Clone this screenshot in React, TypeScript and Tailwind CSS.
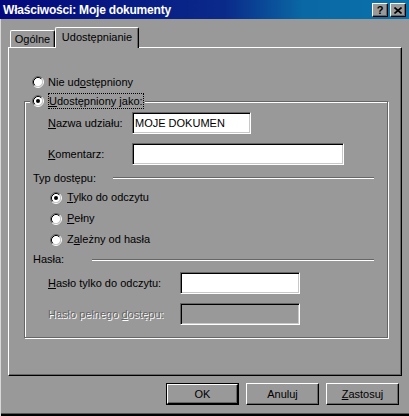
import React from 'react';

// Okno właściwości w stylu Windows 95/98

function Radio({ checked }: { checked?: boolean }) {
  return (
    <svg width="12" height="12" viewBox="0 0 12 12" className="shrink-0">
      <circle cx="6" cy="6" r="4.5" fill="#fff" />
      <path d="M2.11 9.89A5.5 5.5 0 0 1 9.89 2.11" stroke="#666" fill="none" />
      <path d="M9.89 2.11A5.5 5.5 0 0 1 2.11 9.89" stroke="#fff" fill="none" />
      <path d="M2.82 9.18A4.5 4.5 0 0 1 9.18 2.82" stroke="#000" fill="none" />
      <path d="M9.18 2.82A4.5 4.5 0 0 1 2.82 9.18" stroke="#c8c8c8" fill="none" />
      {checked && <circle cx="6" cy="6" r="2" fill="#000" />}
    </svg>
  );
}

function Field({ className, value, disabled }: { className: string; value?: string; disabled?: boolean }) {
  return (
    <div
      className={`h-[22px] shrink-0 border border-t-[#666] border-l-[#666] border-r-white border-b-white shadow-[inset_1px_1px_0_#000,inset_-1px_-1px_0_#c8c8c8] pl-[2px] flex items-center ${
        disabled ? 'bg-[#999]' : 'bg-white'
      } ${className}`}
    >
      {value}
    </div>
  );
}

function Button({ children, isDefault }: { children: React.ReactNode; isDefault?: boolean }) {
  return (
    <div className={`w-[73px] h-[22px] ${isDefault ? 'border border-black' : ''}`}>
      <div className="h-full border border-t-white border-l-white border-r-black border-b-black shadow-[inset_-1px_-1px_0_#666] flex items-center justify-center">
        {children}
      </div>
    </div>
  );
}

function Etched({ className }: { className: string }) {
  return <div className={`h-[2px] border-t border-t-[#666] border-b border-b-white ${className}`} />;
}

export default function App() {
  return (
    <div className="w-[409px] h-[416px] overflow-hidden bg-[#999] flex flex-col text-[11px] leading-none text-black font-['Liberation_Sans',Arial,sans-serif] select-none">
      {/* Pasek tytułu */}
      <div className="h-[19px] shrink-0 flex pl-[3px] pr-[3px] bg-[linear-gradient(90deg,#04087c_0%,#0a2a8a_55%,#0a68a4_74%,#0a72aa_100%)]">
        <span className="flex-1 self-center text-white font-bold text-[12px] tracking-[-0.2px]">
          Właściwości: Moje dokumenty
        </span>
        <div className="flex gap-[2px] mt-[3px]">
          <div className="w-[16px] h-[14px] bg-[#999] border border-t-white border-l-white border-r-black border-b-black shadow-[inset_-1px_-1px_0_#666] flex items-center justify-center font-bold text-[11px]">
            ?
          </div>
          <div className="w-[16px] h-[14px] bg-[#999] border border-t-white border-l-white border-r-black border-b-black shadow-[inset_-1px_-1px_0_#666] flex items-center justify-center">
            <svg width="8" height="7" viewBox="0 0 8 7">
              <path d="M0.5 0.5L7.5 6.5M7.5 0.5L0.5 6.5" stroke="#000" strokeWidth="1.6" />
            </svg>
          </div>
        </div>
      </div>

      <div className="flex-1 flex flex-col border-l border-l-[#d8d8d8]">
        {/* Zakładki */}
        <div className="mt-[8px] h-[20px] shrink-0 flex items-end pl-[9px]">
          <div className="w-[45px] h-[17px] border-t border-l border-t-white border-l-white border-r border-r-black shadow-[inset_-1px_0_0_#666] rounded-t-[2px] flex items-center justify-center pt-[1px]">
            Ogólne
          </div>
          <div className="relative z-10 -mb-px w-[84px] h-[21px] bg-[#999] border-t border-l border-t-white border-l-white border-r border-r-black shadow-[inset_-1px_0_0_#666] rounded-t-[2px] flex items-center justify-center pb-[2px]">
            Udostępnianie
          </div>
        </div>

        {/* Panel */}
        <div className="ml-[7px] w-[394px] h-[329px] shrink-0 border border-t-white border-l-white border-r-black border-b-black shadow-[inset_-1px_-1px_0_#666] pt-[27px] pl-[15px]">
          <div className="h-[14px] flex items-center pl-[8px] gap-[4px]">
            <Radio />
            <span>
              Nie ud<span className="underline">o</span>stępniony
            </span>
          </div>

          <div className="relative mt-[12px] w-[364px] border border-[#666] shadow-[inset_1px_1px_0_#fff,1px_1px_0_#fff] pt-[10px] pb-[12px]">
            {/* Legenda grupy */}
            <div className="absolute top-[-9px] left-[5px] h-[16px] flex items-center bg-[#999] pl-[2px] pr-[1px] gap-[4px]">
              <Radio checked />
              <span className="h-[16px] border border-dotted border-black flex items-center">
                <span className="underline">U</span>dostępniony jako:
              </span>
            </div>

            <div className="flex items-center h-[22px] pl-[23px]">
              <span className="w-[84px] shrink-0">
                <span className="underline">N</span>azwa udziału:
              </span>
              <Field className="w-[119px]" value="MOJE DOKUMEN" />
            </div>

            <div className="mt-[9px] flex items-center h-[22px] pl-[23px]">
              <span className="w-[84px] shrink-0">
                <span className="underline">K</span>omentarz:
              </span>
              <Field className="w-[212px]" />
            </div>

            <div className="mt-[6px] h-[14px] flex items-center pl-[8px]">
              <span className="w-[80px] shrink-0">Typ dostępu:</span>
              <Etched className="w-[261px]" />
            </div>

            <div className="mt-[2px] flex flex-col">
              <div className="h-[21px] flex items-center pl-[25px] gap-[5px]">
                <Radio checked />
                <span>
                  <span className="underline">T</span>ylko do odczytu
                </span>
              </div>
              <div className="h-[21px] flex items-center pl-[25px] gap-[5px]">
                <Radio />
                <span>
                  <span className="underline">P</span>ełny
                </span>
              </div>
              <div className="h-[21px] flex items-center pl-[25px] gap-[5px]">
                <Radio />
                <span>
                  Z<span className="underline">a</span>leżny od hasła
                </span>
              </div>
            </div>

            <div className="mt-[2px] h-[14px] flex items-center pl-[8px]">
              <span className="w-[59px] shrink-0">Hasła:</span>
              <Etched className="w-[282px] mt-[2px]" />
            </div>

            <div className="mt-[6px] flex items-center h-[22px] pl-[23px]">
              <span className="w-[132px] shrink-0">
                <span className="underline">H</span>asło tylko do odczytu:
              </span>
              <Field className="w-[120px]" />
            </div>

            <div className="mt-[9px] flex items-center h-[22px] pl-[23px]">
              <span className="w-[132px] shrink-0 text-[#666] [text-shadow:1px_1px_0_#fff]">
                Hasło pełnego <span className="underline">d</span>ostępu:
              </span>
              <Field className="w-[120px]" disabled />
            </div>
          </div>
        </div>

        {/* Przyciski */}
        <div className="mt-[7px] flex justify-end gap-[7px] pr-[10px]">
          <Button isDefault>OK</Button>
          <Button>Anuluj</Button>
          <Button>
            <span>
              <span className="underline">Z</span>astosuj
            </span>
          </Button>
        </div>

        <div className="mt-auto h-[3px] border-t border-t-[#555] bg-black" />
      </div>
    </div>
  );
}
